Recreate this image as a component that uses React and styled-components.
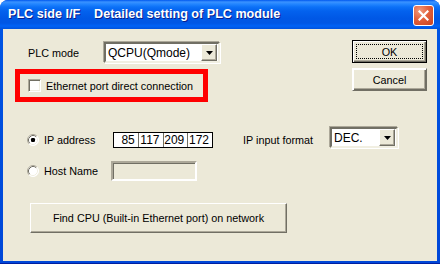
import React from "react";
import styled, { createGlobalStyle } from "styled-components";

const GlobalStyle = createGlobalStyle`
	html, body {
		margin: 0;
		padding: 0;
		background: #ffffff;
	}
	body {
		font-family: "Liberation Sans", Arial, sans-serif;
		font-size: 10.8px;
		color: #000;
	}
`;

const RadioIcon = ({ checked }) => (
	<svg width="12" height="12" viewBox="0 0 12 12">
		<circle cx="6" cy="6" r="5.5" fill="#fff" />
		<path d="M2.11 9.89 A5.5 5.5 0 0 1 9.89 2.11" fill="none" stroke="#ACA899" />
		<path d="M9.89 2.11 A5.5 5.5 0 0 1 2.11 9.89" fill="none" stroke="#fff" />
		<path d="M2.82 9.18 A4.5 4.5 0 0 1 9.18 2.82" fill="none" stroke="#716F64" />
		<path d="M9.18 2.82 A4.5 4.5 0 0 1 2.82 9.18" fill="none" stroke="#F1EFE2" />
		{checked && <rect x="4" y="4" width="4" height="4" rx="1.2" fill="#000" />}
	</svg>
);

const ArrowIcon = () => (
	<svg width="7" height="4" viewBox="0 0 7 4">
		<path d="M0 0 H7 L3.5 4 Z" fill="#000" />
	</svg>
);

const App = () => {
	return (
		<>
			<GlobalStyle />
			<Window>
				<TitleBar>
					<Title>PLC side I/F&nbsp;&nbsp;&nbsp;&nbsp;Detailed setting of PLC module</Title>
					<CloseButton>
						<svg width="11" height="11" viewBox="0 0 11 11">
							<path d="M1.5 1.5 L9.5 9.5 M9.5 1.5 L1.5 9.5" stroke="#fff" strokeWidth="2.2" strokeLinecap="square" />
						</svg>
					</CloseButton>
				</TitleBar>
				<Frame>
					<Client>
						<TopSection>
							<LeftTop>
								<ModeRow>
									<FieldLabel $width={76}>PLC mode</FieldLabel>
									<Combo $width={116}>
										<ComboText>QCPU(Qmode)</ComboText>
										<DropButton>
											<ArrowIcon />
										</DropButton>
									</Combo>
								</ModeRow>
								<Highlight>
									<CheckBox />
									<span>Ethernet port direct connection</span>
								</Highlight>
							</LeftTop>
							<ButtonColumn>
								<DialogButton $default>
									<FocusRect>OK</FocusRect>
								</DialogButton>
								<DialogButton>Cancel</DialogButton>
							</ButtonColumn>
						</TopSection>

						<OptionRow $height={26}>
							<RadioOption $width={86}>
								<RadioIcon checked />
								<span>IP address</span>
							</RadioOption>
							<IpBox>
								{["85", "117", "209", "172"].map((octet, i) => (
									<IpField key={`octet-${i}`}>{octet}</IpField>
								))}
							</IpBox>
							<FieldLabel $width={87} $gap={30}>IP input format</FieldLabel>
							<Combo $width={68} $top>
								<ComboText>DEC.</ComboText>
								<DropButton>
									<ArrowIcon />
								</DropButton>
							</Combo>
						</OptionRow>

						<OptionRow $height={20} $gap={8}>
							<RadioOption $width={84}>
								<RadioIcon />
								<span>Host Name</span>
							</RadioOption>
							<DisabledInput />
						</OptionRow>

						<FindButton>Find CPU (Built-in Ethernet port) on network</FindButton>
					</Client>
				</Frame>
			</Window>
		</>
	);
};

const Window = styled.div`
	width: 440px;
	height: 264px;
	display: flex;
	flex-direction: column;
	border-radius: 8px 8px 0 0;
	overflow: hidden;
	background: #0054e3;
`;

const TitleBar = styled.div`
	height: 29px;
	flex: none;
	display: flex;
	justify-content: space-between;
	align-items: flex-start;
	padding: 0 6px 0 8px;
	box-sizing: border-box;
	background: linear-gradient(
		180deg,
		#0058ee 0px,
		#3a93ff 2px,
		#2386ff 4px,
		#0c71f7 7px,
		#0362ee 11px,
		#0058e6 18px,
		#0056e4 23px,
		#0062f6 26px,
		#0052dc 29px
	);
`;

const Title = styled.div`
	margin-top: 7px;
	font-family: "Liberation Sans", Arial, sans-serif;
	font-weight: bold;
	font-size: 12.6px;
	color: #fff;
	text-shadow: 1px 1px 0 #0a1e8c;
	white-space: nowrap;
`;

const CloseButton = styled.div`
	margin-top: 5px;
	width: 21px;
	height: 21px;
	box-sizing: border-box;
	border: 1px solid #fff;
	border-radius: 3px;
	display: flex;
	justify-content: center;
	align-items: center;
	background: radial-gradient(circle at 30% 25%, #f09a7c 0%, #e2603c 45%, #c9421f 100%);
`;

const Frame = styled.div`
	flex: 1;
	display: flex;
	padding: 0 3px 3px 3px;
	background: linear-gradient(180deg, #0054e3 0%, #0047d8 100%);
	box-shadow: inset 0 -1px 0 #001ea0;
`;

const Client = styled.div`
	flex: 1;
	display: flex;
	flex-direction: column;
	background: #ece9d8;
`;

const TopSection = styled.div`
	display: flex;
	justify-content: space-between;
	align-items: flex-start;
`;

const LeftTop = styled.div`
	padding: 13px 0 0 12px;
	display: flex;
	flex-direction: column;
`;

const ModeRow = styled.div`
	display: flex;
	align-items: center;
	margin-left: 13px;
`;

const FieldLabel = styled.div`
	width: ${(p) => p.$width}px;
	margin-left: ${(p) => p.$gap || 0}px;
	flex: none;
	white-space: nowrap;
`;

const Combo = styled.div`
	width: ${(p) => p.$width}px;
	height: 21px;
	box-sizing: border-box;
	align-self: ${(p) => (p.$top ? "flex-start" : "auto")};
	display: flex;
	align-items: center;
	background: #fff;
	border-style: solid;
	border-width: 2px;
	border-color: #716f64 #f1efe2 #f1efe2 #716f64;
	box-shadow: -1px -1px 0 #aca899, 1px 1px 0 #fff;
	padding-right: 1px;
`;

const ComboText = styled.div`
	flex: 1;
	padding-left: 2px;
	font-size: 12px;
	white-space: nowrap;
`;

const DropButton = styled.div`
	width: 16px;
	height: 17px;
	box-sizing: border-box;
	display: flex;
	justify-content: center;
	align-items: center;
	background: #ece9d8;
	border-style: solid;
	border-width: 1px;
	border-color: #fff #716f64 #716f64 #fff;
	box-shadow: inset -1px -1px 0 #aca899;
`;

const Highlight = styled.div`
	margin-top: 6px;
	width: 193px;
	height: 33px;
	box-sizing: border-box;
	border: 5px solid #ff0000;
	display: flex;
	align-items: center;
	gap: 5px;
	padding-left: 8px;
	white-space: nowrap;
`;

const CheckBox = styled.div`
	width: 13px;
	height: 13px;
	box-sizing: border-box;
	flex: none;
	background: #fff;
	border-style: solid;
	border-width: 1px;
	border-color: #aca899 #fff #fff #aca899;
	box-shadow: inset 1px 1px 0 #716f64, inset -1px -1px 0 #f1efe2;
`;

const ButtonColumn = styled.div`
	padding-top: 11px;
	margin-right: 10px;
	display: flex;
	flex-direction: column;
	gap: 5px;
`;

const DialogButton = styled.div`
	width: 75px;
	height: 23px;
	box-sizing: border-box;
	display: flex;
	justify-content: center;
	align-items: center;
	background: #ece9d8;
	border: 1px solid ${(p) => (p.$default ? "#000" : "#ece9d8")};
	box-shadow: inset 1px 1px 0 #fff, inset -1px -1px 0 #716f64, inset -2px -2px 0 #aca899;
	border-top-color: ${(p) => (p.$default ? "#000" : "#fff")};
	border-left-color: ${(p) => (p.$default ? "#000" : "#fff")};
	border-right-color: ${(p) => (p.$default ? "#000" : "#716f64")};
	border-bottom-color: ${(p) => (p.$default ? "#000" : "#716f64")};
`;

const FocusRect = styled.div`
	width: 67px;
	height: 15px;
	box-sizing: border-box;
	border: 1px dotted #000;
	display: flex;
	justify-content: center;
	align-items: center;
`;

const OptionRow = styled.div`
	height: ${(p) => p.$height}px;
	margin-top: ${(p) => p.$gap || 25}px;
	padding-left: 24px;
	display: flex;
	align-items: center;
`;

const RadioOption = styled.div`
	width: ${(p) => p.$width}px;
	flex: none;
	display: flex;
	align-items: center;
	gap: 5px;
	white-space: nowrap;

	svg {
		flex: none;
	}
`;

const IpBox = styled.div`
	width: 100px;
	height: 16px;
	box-sizing: border-box;
	border: 1px solid #000;
	background: #fff;
	display: flex;
`;

const IpField = styled.div`
	flex: 1;
	text-align: right;
	padding-right: 3px;
	font-size: 12px;
	line-height: 14px;
	border-left: 1px solid #716f64;

	&:first-child {
		border-left: none;
	}
`;

const DisabledInput = styled.div`
	width: 86px;
	height: 20px;
	box-sizing: border-box;
	background: #ece9d8;
	border-style: solid;
	border-width: 2px;
	border-color: #aca899 #fff #fff #aca899;
	box-shadow: inset 1px 1px 0 #716f64;
`;

const FindButton = styled.div`
	margin: 22px 0 0 27px;
	width: 257px;
	height: 30px;
	box-sizing: border-box;
	display: flex;
	justify-content: center;
	align-items: center;
	background: #ece9d8;
	border-style: solid;
	border-width: 1px;
	border-color: #fff #716f64 #716f64 #fff;
	box-shadow: inset -1px -1px 0 #aca899;
	white-space: nowrap;
`;

export default App;
